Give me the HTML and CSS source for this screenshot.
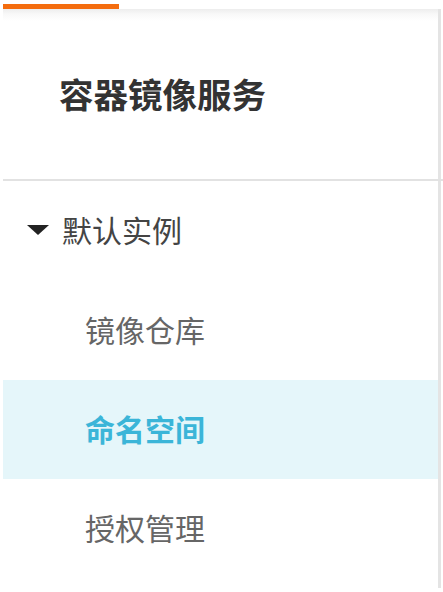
FILE: index.html
```html
<!DOCTYPE html>
<html lang="zh-CN">
<head>
<meta charset="utf-8">
<title>容器镜像服务</title>
<link rel="stylesheet" href="styles.css">
</head>
<body>
<div class="page">
  <div class="progress"></div>
  <aside class="panel">
    <div class="header">
      <h1 class="title">容器镜像服务</h1>
    </div>
    <div class="divider"></div>
    <nav class="menu">
      <div class="group">
        <span class="caret"></span>
        <span class="group-label">默认实例</span>
      </div>
      <a class="item">镜像仓库</a>
      <a class="item active">命名空间</a>
      <a class="item">授权管理</a>
    </nav>
  </aside>
</div>
</body>
</html>
```

FILE: styles.css
```css
html, body {
  margin: 0;
  padding: 0;
  background: #ffffff;
}
body {
  width: 443px;
  height: 592px;
  overflow: hidden;
  font-family: "Noto Sans CJK SC", "Noto Sans", sans-serif;
}
.page {
  display: flex;
  flex-direction: column;
  padding-top: 4px;
}
.progress {
  width: 116px;
  height: 5px;
  margin-left: 3px;
  background: #f46c0e;
}
.panel {
  margin-left: 3px;
  width: 435px;
  height: 579px;
  border-right: 3px solid #e4e4e4;
  background: linear-gradient(#ededed 0px, #f8f8f8 5px, #ffffff 12px);
  display: flex;
  flex-direction: column;
}
.header {
  height: 170px;
  display: flex;
  align-items: center;
  padding-left: 56px;
  padding-bottom: 2px;
  box-sizing: border-box;
}
.title {
  margin: 0;
  font-size: 34.5px;
  font-weight: 700;
  color: #333;
  line-height: 1;
}
.divider {
  height: 2px;
  background: #e2e2e2;
  margin-right: -5px;
}
.menu {
  display: flex;
  flex-direction: column;
}
.group {
  height: 100px;
  display: flex;
  align-items: center;
  padding-left: 24px;
  padding-bottom: 4px;
  box-sizing: border-box;
}
.caret {
  width: 0;
  height: 0;
  border-left: 11px solid transparent;
  border-right: 11px solid transparent;
  border-top: 10px solid #222;
  margin-right: 13px;
  margin-top: 2px;
}
.group-label {
  font-size: 30px;
  color: #444;
  line-height: 1;
}
.item {
  height: 99px;
  display: flex;
  align-items: center;
  padding-left: 82px;
  padding-bottom: 3px;
  box-sizing: border-box;
  font-size: 30px;
  color: #666;
  line-height: 1;
  text-decoration: none;
}
.item.active {
  background: #e5f6fa;
  color: #3bb5d8;
  font-weight: 700;
}
```
